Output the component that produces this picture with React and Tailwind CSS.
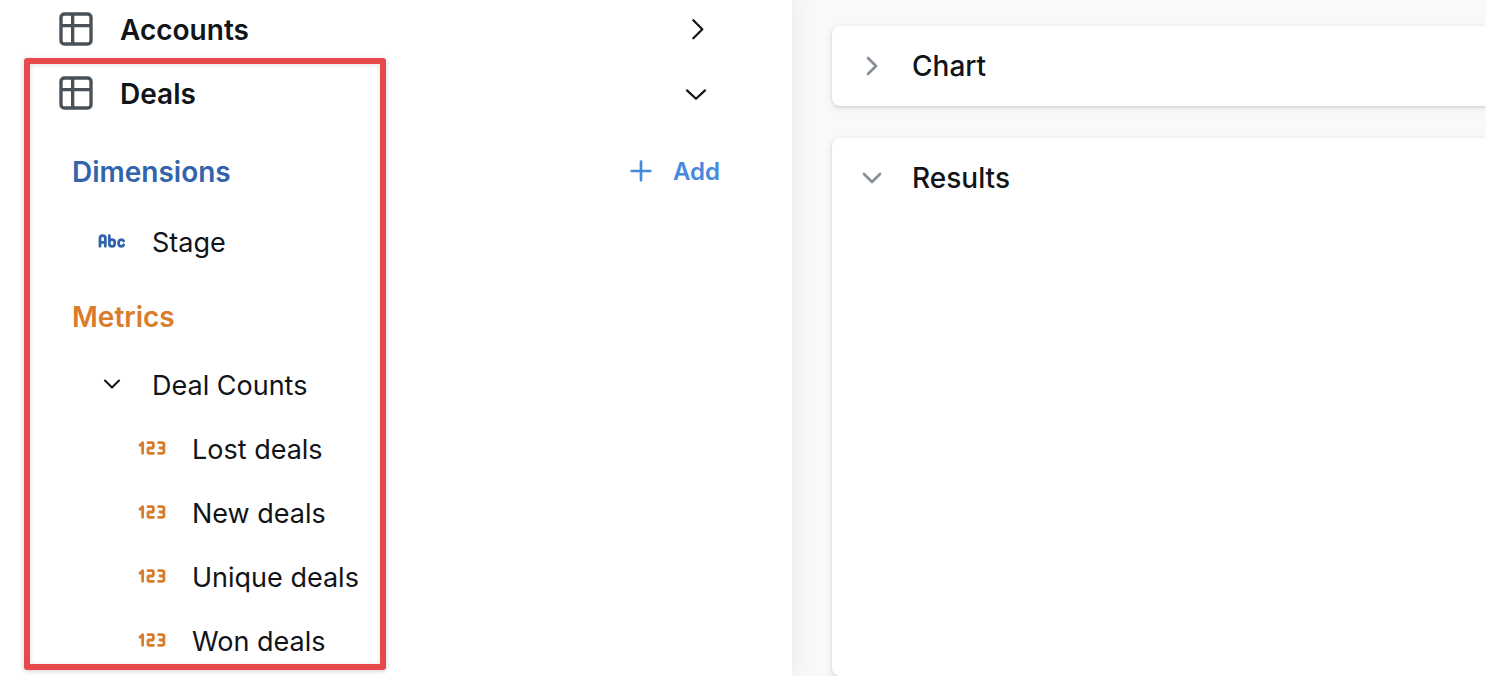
import React from 'react';

const metrics = ['Lost deals', 'New deals', 'Unique deals', 'Won deals'];

const icons = {
  table: 'M3 5a2 2 0 0 1 2-2h14a2 2 0 0 1 2 2v14a2 2 0 0 1-2 2h-14a2 2 0 0 1-2-2v-14zM3 10h18M10 3v18',
  right: 'M9 6l6 6l-6 6',
  expand: 'M10.2 5.5l6 6l-6 6',
  down: 'M6 9l6 6l6-6',
  collapse: 'M6 9.6l6 5.6l6-5.6',
  plus: 'M12 5v14M5 12h14',
  string:
    'M3 16v-6a2 2 0 1 1 4 0v6M3 13h4M10 8v6a2 2 0 1 0 4 0v-1a2 2 0 1 0-4 0v1M20.732 12a2 2 0 0 0-3.732 1v1a2 2 0 0 0 3.726 1.01',
  number:
    'M3 10l2-2v8M9 8h3a1 1 0 0 1 1 1v2a1 1 0 0 1-1 1h-2a1 1 0 0 0-1 1v2a1 1 0 0 0 1 1h3M17 8h2.5a1.5 1.5 0 0 1 1.5 1.5v1a1.5 1.5 0 0 1-1.5 1.5h-1.5h1.5a1.5 1.5 0 0 1 1.5 1.5v1a1.5 1.5 0 0 1-1.5 1.5h-2.5',
};

function Icon({ name, size, stroke = 2, className = '' }) {
  return (
    <svg
      width={size}
      height={size}
      viewBox="0 0 24 24"
      fill="none"
      stroke="currentColor"
      strokeWidth={stroke}
      strokeLinecap="round"
      strokeLinejoin="round"
      aria-hidden="true"
      className={`shrink-0 ${className}`}
    >
      <path d={icons[name]} />
    </svg>
  );
}

function TableRow({ name, open }) {
  return (
    <button
      type="button"
      aria-expanded={open}
      className="flex h-16 w-full items-center pr-[78px] pl-14 text-left font-semibold"
    >
      <Icon name="table" size={40} className="mb-0.5 text-[#495057]" />
      <span className="ml-6 grow">{name}</span>
      <Icon name={open ? 'collapse' : 'expand'} size={36} stroke={1.5} />
    </button>
  );
}

function Panel({ title, open, className = '' }) {
  return (
    <section className={`rounded-l-lg bg-white shadow-[0_2px_6px_rgba(0,0,0,0.1),0_1px_3px_rgba(0,0,0,0.1)] ${className}`}>
      <h2>
        <button
          type="button"
          aria-expanded={open}
          className="flex h-20 w-full items-center gap-6 px-6 text-left font-medium"
        >
          <Icon name={open ? 'down' : 'right'} size={32} className="text-[#868e96]" />
          {title}
        </button>
      </h2>
    </section>
  );
}

export default function App() {
  return (
    <div className="flex h-screen overflow-hidden bg-[#f8f9fb] font-['Inter',sans-serif] text-[28px] leading-10 text-[#111418]">
      <aside className="z-10 w-[792px] shrink-0 bg-white shadow-[0_0_28px_rgba(0,0,0,0.08)]">
        <nav className="-mt-0.5">
          <TableRow name="Accounts" open={false} />
          <section className="relative">
            <TableRow name="Deals" open />

            <div className="mt-3.5 flex h-16 items-center justify-between px-[72px]">
              <h3 className="font-semibold text-[#3264ab]">Dimensions</h3>
              <button type="button" className="flex items-center gap-4 text-2xl font-semibold text-[#4588e0]">
                <Icon name="plus" size={32} className="mb-0.5" />
                Add
              </button>
            </div>
            <a href="#stage" className="mt-[7px] flex h-16 items-center gap-6 pl-24 text-[27px]">
              <Icon name="string" size={32} stroke={2.1} className="mb-1 text-[#3264ab]" />
              Stage
            </a>

            <h3 className="mt-2.5 flex h-16 items-center pl-[72px] font-semibold text-[#d97c2b]">Metrics</h3>
            <button
              type="button"
              aria-expanded="true"
              className="mt-[5px] flex h-16 w-full items-center gap-[26px] pl-[98px] text-[27px]"
            >
              <Icon name="down" size={28} stroke={1.8} className="mb-1" />
              Deal Counts
            </button>
            <ul className="text-[27px]">
              {metrics.map((name) => (
                <li key={name}>
                  <a href="#metric" className="flex h-16 items-center gap-6 pl-34">
                    <Icon name="number" size={32} stroke={2.1} className="mb-1 text-[#d97c2b]" />
                    {name}
                  </a>
                </li>
              ))}
            </ul>
            <div className="pointer-events-none absolute -top-1 bottom-1 left-6 w-[362px] rounded-[3px] border-6 border-[#e6484c] shadow-[0_1px_5px_rgba(0,0,0,0.2),inset_0_1px_5px_rgba(0,0,0,0.12)]" />
          </section>
        </nav>
      </aside>

      <main className="flex min-w-0 grow flex-col gap-8 pt-[26px] pl-10">
        <Panel title="Chart" open={false} />
        <Panel title="Results" open className="grow" />
      </main>
    </div>
  );
}
